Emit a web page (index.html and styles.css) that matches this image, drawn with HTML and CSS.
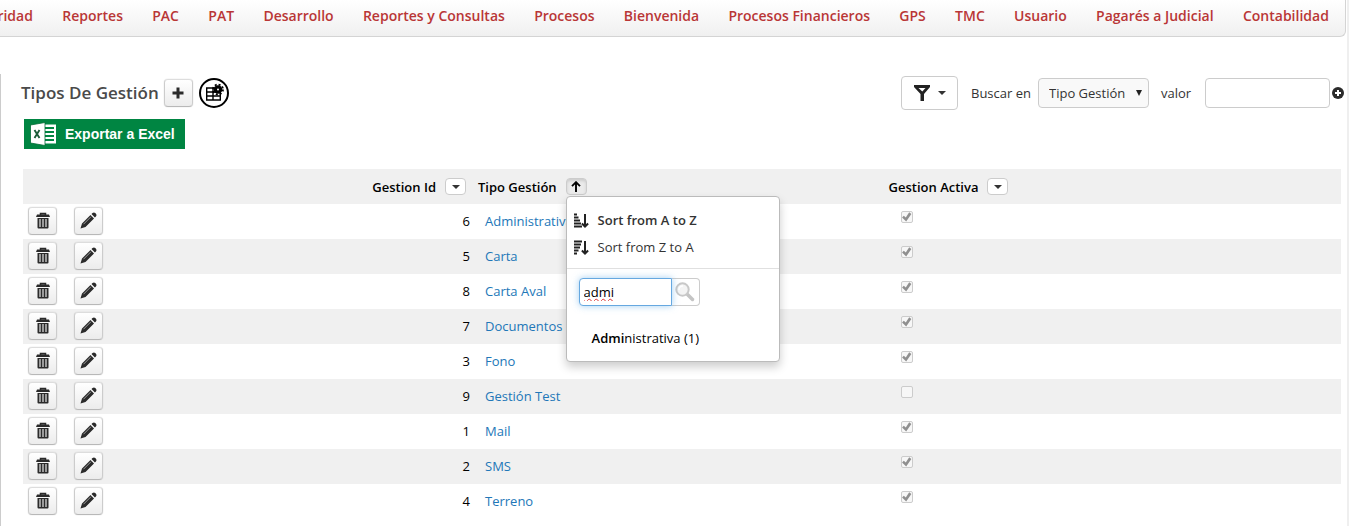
FILE: index.html
```
<!DOCTYPE html>
<html lang="es">
<head>
<meta charset="utf-8">
<title>Tipos De Gestión</title>
<link rel="stylesheet" href="styles.css">
</head>
<body>
<svg class="sprite" aria-hidden="true">
  <symbol id="trash" viewBox="0 0 14 17">
    <path fill="#888" stroke="#2b2b2b" stroke-width="1.5" d="M4.5 3V1.5h5V3"/>
    <path fill="#2b2b2b" d="M1 2.600h12L14 5H0zM1.500 6h11v9.500q0 1-1 1h-9q-1 0-1-1z"/>
    <path stroke="#e4e4e4" stroke-width="1.200" d="M4 7v8M7 7v8M10 7v8"/>
  </symbol>
  <symbol id="pencil" viewBox="0 0 17 17">
    <path fill="#2b2b2b" d="M0.500 16.500l1.500-5L10.500 3 14 6.500 5.500 15zM11.500 2l1-1q1.500-1.200 2.800 0l.6.700q1.200 1.300 0 2.800l-1 1z"/>
    <path stroke="#999" stroke-width="1" d="M3.500 12.200l7.500-7.500"/>
  </symbol>
</svg>

<nav class="nav">
  <ul class="nav-list">
    <li><a href="#">Seguridad</a></li>
    <li><a href="#">Reportes</a></li>
    <li><a href="#">PAC</a></li>
    <li><a href="#">PAT</a></li>
    <li><a href="#">Desarrollo</a></li>
    <li><a href="#">Reportes y Consultas</a></li>
    <li><a href="#">Procesos</a></li>
    <li><a href="#">Bienvenida</a></li>
    <li><a href="#">Procesos Financieros</a></li>
    <li><a href="#">GPS</a></li>
    <li><a href="#">TMC</a></li>
    <li><a href="#">Usuario</a></li>
    <li><a href="#">Pagarés a Judicial</a></li>
    <li><a href="#">Contabilidad</a></li>
  </ul>
</nav>

<main class="panel">
  <header class="toolbar">
    <h1 class="title">Tipos De Gestión</h1>
    <button class="icon-btn" type="button" aria-label="Agregar">
      <svg width="12" height="12" viewBox="0 0 12 12"><path stroke="#2b2b2b" stroke-width="3" d="M6 0.500v11M0.500 6h11"/></svg>
    </button>
    <button class="round-btn" type="button" aria-label="Configurar tabla">
      <svg width="30" height="30" viewBox="0 0 30 30">
        <circle cx="15" cy="15" r="14" fill="#fff" stroke="#000" stroke-width="2"/>
        <path fill="none" stroke="#000" stroke-width="1.400" d="M7.700 10h13.600v12H7.700zM7.700 14h13.600M7.700 18h13.600M14 10v12"/>
        <circle cx="19" cy="11.500" r="4.300" fill="#000"/>
        <circle cx="19" cy="11.500" r="5" fill="none" stroke="#000" stroke-width="1.800" stroke-dasharray="2 1.927"/>
        <circle cx="19" cy="11.500" r="1" fill="#fff"/>
      </svg>
    </button>
    <form class="search">
      <button class="filter-btn" type="button" aria-label="Filtros">
        <svg width="16" height="16" viewBox="0 0 16 16"><path fill="#222" d="M0 0h16v2L10 9v7H6.500V9L0 2z"/><path fill="#fff" d="M4.500 3h7L8.300 6.500z"/></svg>
        <span class="caret"></span>
      </button>
      <label class="search-label" for="field">Buscar en</label>
      <span class="select-wrap">
        <select id="field" class="select"><option>Tipo Gestión</option></select>
      </span>
      <label class="value-label" for="value">valor</label>
      <input id="value" class="value" type="text">
      <button class="plain-btn" type="button" aria-label="Agregar criterio">
        <svg width="12" height="12" viewBox="0 0 12 12"><circle cx="6" cy="6" r="6" fill="#2b2b2b"/><path stroke="#fff" stroke-width="2" d="M6 3v6M3 6h6"/></svg>
      </button>
    </form>
  </header>

  <button class="excel-btn" type="button">
    <svg width="27" height="24" viewBox="0 0 27 24">
      <path fill="#fff" d="M14 2.500h12v19H14z"/>
      <path stroke="#008542" stroke-width="1.800" d="M15 6h9M15 10h9M15 14h9M15 18h9"/>
      <path fill="#fff" stroke="#006b35" stroke-width=".8" d="M0.500 3L15 .5v23L.5 21z"/>
      <path fill="none" stroke="#1d5c3a" stroke-width="1.900" d="M4.500 8l5 8M9.500 8l-5 8"/>
    </svg>
    <span>Exportar a Excel</span>
  </button>

  <table class="grid">
    <colgroup><col class="c-act"><col class="c-act"><col class="c-id"><col class="c-name"><col class="c-on"></colgroup>
    <thead>
      <tr>
        <th></th>
        <th></th>
        <th class="id-head"><span class="head">Gestion Id <button class="col-btn" type="button" aria-label="Filtrar Gestion Id"><span class="caret"></span></button></span></th>
        <th class="name-head">
          <span class="head">Tipo Gestión
            <span class="anchor">
              <button class="col-btn col-btn-on" type="button" aria-label="Filtrar Tipo Gestión"><svg width="10" height="11" viewBox="0 0 10 11"><path fill="none" stroke="#000" stroke-width="1.900" d="M5 11V1.500M1 5.200l4-4 4 4"/></svg></button>
              <span class="menu">
                <span class="sorts">
                  <button class="sort sort-on" type="button"><svg width="15" height="15" viewBox="0 0 15 15"><path stroke="#222" stroke-width="2" d="M0 1.500h3M0 4.500h4.500M0 7.500h6M0 10.500h7M0 13.500h8"/><path fill="none" stroke="#222" stroke-width="2" d="M11 1v12.500M7.900 10.500l3.100 3 3.100-3"/></svg>Sort from A to Z</button>
                  <button class="sort" type="button"><svg width="15" height="15" viewBox="0 0 15 15"><path stroke="#222" stroke-width="2" d="M0 1.500h8M0 4.500h7M0 7.500h6M0 10.500h4.500M0 13.500h3"/><path fill="none" stroke="#222" stroke-width="2" d="M11 1v12.500M7.900 10.500l3.100 3 3.100-3"/></svg>Sort from Z to A</button>
                </span>
                <span class="find">
                  <input class="find-input" type="text" value="admi" aria-label="Buscar valor">
                  <button class="find-btn" type="button" aria-label="Buscar"><svg width="20" height="20" viewBox="0 0 20 20"><path stroke="#c4c4c4" stroke-width="3.500" stroke-linecap="round" d="M12.500 12.500L17.500 17.500"/><circle cx="7.500" cy="7.500" r="6.200" fill="#f4f4f4" stroke="#c8c8c8" stroke-width="2"/><path fill="none" stroke="#fff" stroke-width="1.500" d="M4 8q0-4 4-4"/></svg></button>
                </span>
                <a class="match" href="#"><b>Admi</b>nistrativa (1)</a>
              </span>
            </span>
          </span>
        </th>
        <th class="on-head"><span class="head">Gestion Activa <button class="col-btn" type="button" aria-label="Filtrar Gestion Activa"><span class="caret"></span></button></span></th>
      </tr>
    </thead>
    <tbody>
      <tr><td><button class="icon-btn" type="button" aria-label="Eliminar"><svg width="14" height="17"><use href="#trash"/></svg></button></td><td><button class="icon-btn" type="button" aria-label="Editar"><svg width="17" height="17"><use href="#pencil"/></svg></button></td><td class="id">6</td><td class="name"><a href="#">Administrativa</a></td><td class="on"><input type="checkbox" aria-label="Activa" checked disabled></td></tr>
      <tr><td><button class="icon-btn" type="button" aria-label="Eliminar"><svg width="14" height="17"><use href="#trash"/></svg></button></td><td><button class="icon-btn" type="button" aria-label="Editar"><svg width="17" height="17"><use href="#pencil"/></svg></button></td><td class="id">5</td><td class="name"><a href="#">Carta</a></td><td class="on"><input type="checkbox" aria-label="Activa" checked disabled></td></tr>
      <tr><td><button class="icon-btn" type="button" aria-label="Eliminar"><svg width="14" height="17"><use href="#trash"/></svg></button></td><td><button class="icon-btn" type="button" aria-label="Editar"><svg width="17" height="17"><use href="#pencil"/></svg></button></td><td class="id">8</td><td class="name"><a href="#">Carta Aval</a></td><td class="on"><input type="checkbox" aria-label="Activa" checked disabled></td></tr>
      <tr><td><button class="icon-btn" type="button" aria-label="Eliminar"><svg width="14" height="17"><use href="#trash"/></svg></button></td><td><button class="icon-btn" type="button" aria-label="Editar"><svg width="17" height="17"><use href="#pencil"/></svg></button></td><td class="id">7</td><td class="name"><a href="#">Documentos</a></td><td class="on"><input type="checkbox" aria-label="Activa" checked disabled></td></tr>
      <tr><td><button class="icon-btn" type="button" aria-label="Eliminar"><svg width="14" height="17"><use href="#trash"/></svg></button></td><td><button class="icon-btn" type="button" aria-label="Editar"><svg width="17" height="17"><use href="#pencil"/></svg></button></td><td class="id">3</td><td class="name"><a href="#">Fono</a></td><td class="on"><input type="checkbox" aria-label="Activa" checked disabled></td></tr>
      <tr><td><button class="icon-btn" type="button" aria-label="Eliminar"><svg width="14" height="17"><use href="#trash"/></svg></button></td><td><button class="icon-btn" type="button" aria-label="Editar"><svg width="17" height="17"><use href="#pencil"/></svg></button></td><td class="id">9</td><td class="name"><a href="#">Gestión Test</a></td><td class="on"><input type="checkbox" aria-label="Activa" disabled></td></tr>
      <tr><td><button class="icon-btn" type="button" aria-label="Eliminar"><svg width="14" height="17"><use href="#trash"/></svg></button></td><td><button class="icon-btn" type="button" aria-label="Editar"><svg width="17" height="17"><use href="#pencil"/></svg></button></td><td class="id">1</td><td class="name"><a href="#">Mail</a></td><td class="on"><input type="checkbox" aria-label="Activa" checked disabled></td></tr>
      <tr><td><button class="icon-btn" type="button" aria-label="Eliminar"><svg width="14" height="17"><use href="#trash"/></svg></button></td><td><button class="icon-btn" type="button" aria-label="Editar"><svg width="17" height="17"><use href="#pencil"/></svg></button></td><td class="id">2</td><td class="name"><a href="#">SMS</a></td><td class="on"><input type="checkbox" aria-label="Activa" checked disabled></td></tr>
      <tr><td><button class="icon-btn" type="button" aria-label="Eliminar"><svg width="14" height="17"><use href="#trash"/></svg></button></td><td><button class="icon-btn" type="button" aria-label="Editar"><svg width="17" height="17"><use href="#pencil"/></svg></button></td><td class="id">4</td><td class="name"><a href="#">Terreno</a></td><td class="on"><input type="checkbox" aria-label="Activa" checked disabled></td></tr>
    </tbody>
  </table>
</main>
</body>
</html>
```

FILE: styles.css
```
* { box-sizing: border-box; }

body {
  margin: 0;
  border-right: 2px solid #efefef;
  background: #fff;
  color: #333;
  font: 13px/20px "Trebuchet MS", "Open Sans", "Noto Sans", sans-serif;
}

button, input, select { font: inherit; color: inherit; }
button { padding: 0; cursor: pointer; }
a { text-decoration: none; }
.sprite { position: absolute; width: 0; height: 0; }

.nav {
  margin-right: 1px;
  padding: 6px 16px 10px 0;
  overflow: hidden;
  border-right: 1px solid #d4d4d4;
  border-bottom: 1px solid #d4d4d4;
  border-radius: 0 0 6px 0;
  background: linear-gradient(#fff, #f0f0f0);
}
.nav-list {
  display: flex;
  justify-content: space-between;
  margin: 0 0 0 -35px;
  padding: 0;
  list-style: none;
}
.nav a {
  color: #b93636;
  font-size: 14px;
  font-weight: 600;
  white-space: nowrap;
}

.panel {
  margin-top: 37px;
  padding: 2px 6px 7px 22px;
  border-left: 1px solid #ccc;
}

.toolbar {
  display: flex;
  align-items: center;
  margin: 0 -3px 0 -2px;
}
.title {
  margin: 0 5px 0 0;
  color: #4a4a4a;
  font-size: 17px;
  font-weight: 600;
}

.icon-btn {
  display: flex;
  align-items: center;
  justify-content: center;
  width: 29px;
  height: 28px;
  border: 1px solid #bbb;
  border-color: #ddd #ccc #b8b8b8;
  border-radius: 4px;
  background: linear-gradient(#fff, #ececec);
  box-shadow: 0 0 1px #bbb;
}
.round-btn {
  display: flex;
  margin-left: 6px;
  border: 0;
  background: none;
}

.search {
  display: flex;
  align-items: center;
  margin-left: auto;
}
.filter-btn {
  display: flex;
  align-items: center;
  justify-content: center;
  gap: 8px;
  width: 57px;
  height: 34px;
  border: 1px solid #ccc;
  border-radius: 4px;
  background: #fff;
}
.caret {
  border: 4px solid transparent;
  border-top-color: #333;
  border-bottom: 0;
}
.search-label { width: 80px; padding-left: 13px; white-space: nowrap; }
.select-wrap { display: flex; position: relative; }
.select-wrap::after {
  content: "";
  position: absolute;
  top: 12px;
  right: 7px;
  border: 3px solid transparent;
  border-top: 6px solid #222;
  border-bottom: 0;
  pointer-events: none;
}
.select {
  appearance: none;
  width: 111px;
  height: 30px;
  padding: 0 10px;
  border: 1px solid #ccc;
  border-radius: 4px;
  background: #f9f9f9;
}
.value-label { width: 56px; padding-left: 12px; }
.value {
  width: 125px;
  height: 30px;
  border: 1px solid #ccc;
  border-radius: 4px;
  background: #fff;
}
.plain-btn { display: flex; margin-left: 2px; border: 0; background: none; }

.excel-btn {
  display: flex;
  align-items: center;
  gap: 8px;
  height: 30px;
  margin: 9px 0 20px 1px;
  padding: 0 10px 0 6px;
  border: 0;
  background: #008542;
  color: #fff;
  font: bold 14px "Liberation Sans", Arial, sans-serif;
}

.grid {
  width: 100%;
  border-collapse: collapse;
  table-layout: fixed;
}
.c-act { width: 46px; }
.c-id { width: 360px; }
.c-name { width: 31%; }
.grid tr { height: 35px; }
.grid thead tr, .grid tbody tr:nth-child(even) { background: #f0f0f0; }
.grid th, .grid td { padding: 0 5px; text-align: left; }
.grid td { padding-bottom: 2px; }
.grid th { color: #000; font-weight: 600; }
.grid th.id-head { padding-right: 9px; }
.grid th.name-head { padding-left: 3px; }
.head { display: flex; align-items: center; gap: 9px; white-space: nowrap; }
.id-head .head { justify-content: flex-end; }
.col-btn {
  display: flex;
  align-items: center;
  justify-content: center;
  width: 21px;
  height: 17px;
  border: 1px solid #ccc;
  border-radius: 4px;
  background: #fff;
}
.col-btn-on { background: #ebebeb; box-shadow: inset 0 2px 3px #ccc; }
.grid td.id { color: #000; text-align: right; }
.grid td.name { padding-left: 10px; }
.name a { color: #2277b8; }
.grid td.on { padding: 7px 17px 0; vertical-align: top; }
.on input {
  display: block;
  appearance: none;
  width: 12px;
  height: 12px;
  margin: 0;
  border: 1px solid #ccc;
  border-radius: 2px;
  background: #f7f7f7;
}
.on input:checked::after {
  content: "";
  display: block;
  height: 10px;
  background: #909090;
  clip-path: polygon(5% 55%, 22% 38%, 42% 55%, 76% 3%, 98% 20%, 46% 95%);
}

.anchor { position: relative; }
.menu {
  position: absolute;
  z-index: 2;
  top: 18px;
  left: 0;
  width: 214px;
  padding-bottom: 13px;
  border: 1px solid #bbb;
  border-radius: 4px;
  background: #fff;
  box-shadow: 0 5px 10px #0003;
  font-weight: 400;
}
.sorts {
  display: grid;
  gap: 7px;
  padding: 13px 7px 11px;
  border-bottom: 1px solid #e0e0e0;
}
.sort {
  display: flex;
  align-items: center;
  gap: 9px;
  border: 0;
  background: none;
  color: #333;
}
.sort-on { font-weight: 600; }
.find { display: flex; padding: 9px 12px 22px; }
.find-input {
  position: relative;
  width: 93px;
  height: 28px;
  padding: 0 4px;
  border: 1px solid #66a8e0;
  border-radius: 4px 0 0 4px;
  outline: 0;
  box-shadow: 0 0 7px #66afe999;
  text-decoration: underline wavy #d33 1px;
  text-decoration-skip-ink: none;
}
.find-btn {
  display: flex;
  align-items: center;
  justify-content: center;
  width: 28px;
  height: 28px;
  border: 1px solid #ccc;
  border-left: 0;
  border-radius: 0 4px 4px 0;
  background: #fff;
}
.match { display: block; padding-left: 25px; color: #000; }
.match b { font-weight: 600; }
```
